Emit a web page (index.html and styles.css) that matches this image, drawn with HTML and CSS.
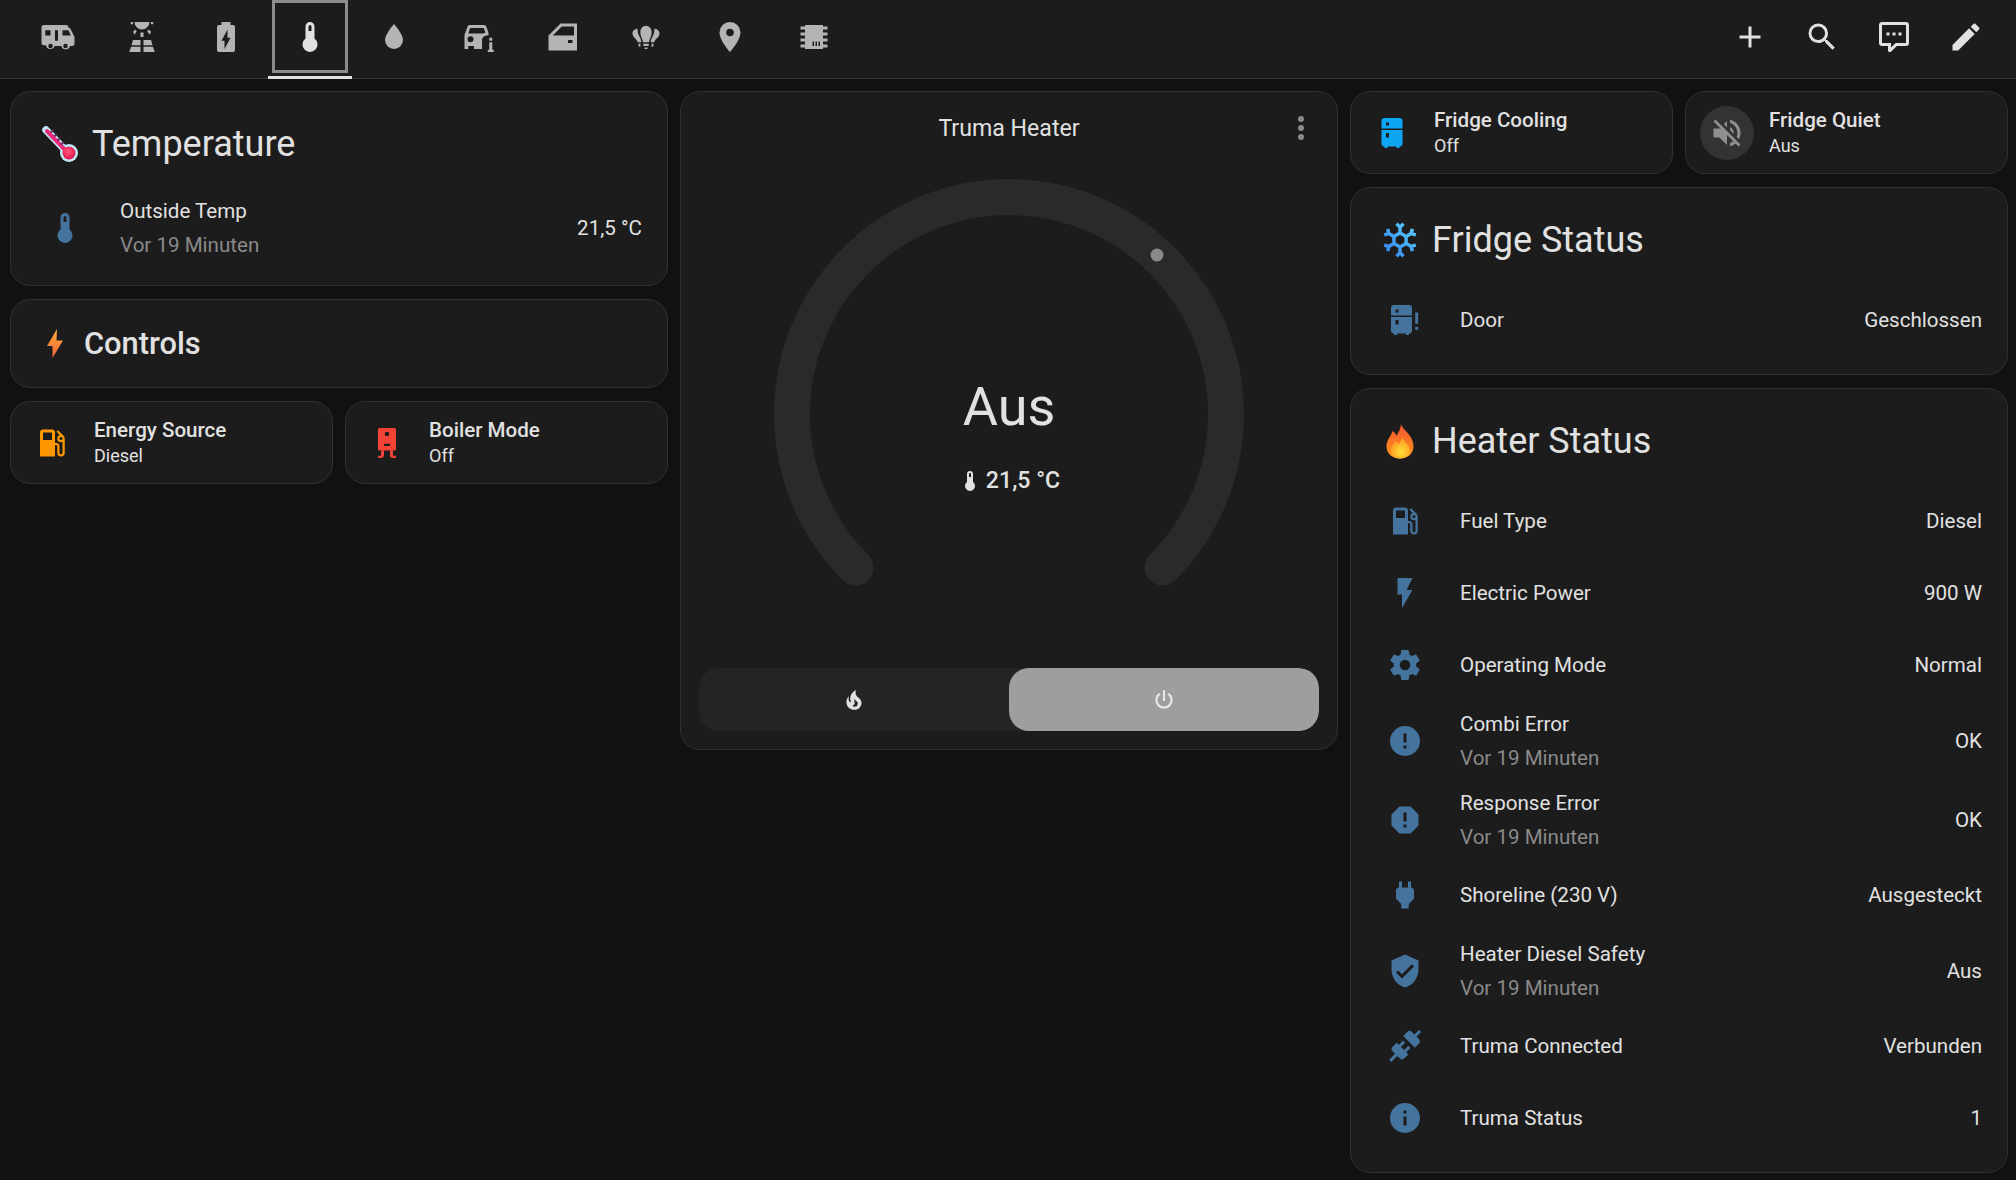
FILE: index.html
```html
<!DOCTYPE html>
<html lang="de">
<head>
<meta charset="utf-8">
<title>Truma Heater</title>
<link rel="stylesheet" href="styles.css">
</head>
<body>
<header class="topbar">
  <nav class="tabs">
    <div class="tab"><span class="tab-box"><svg class="ic" viewBox="0 0 24 24"><path fill-rule="evenodd" d="M2.5 4H17c1 0 1.6.4 2 1.1l.3.9H20l3 6v4.5c0 .8-.6 1.5-1.5 1.5H20a3 3 0 0 1-5.8 0H9.8A3 3 0 0 1 4 17.5H2.5C1.600 17.500 1 16.900 1 16V5.500C1 4.700 1.600 4 2.500 4ZM3.500 7.500V11H7V7.500ZM10 7.500V14.500H12V7.500ZM15 7.500V11H20.500L19 7.500ZM7 16.500A1.500 1.500 0 1 0 7 19.500A1.500 1.500 0 1 0 7 16.500ZM17 16.500A1.500 1.500 0 1 0 17 19.500A1.500 1.500 0 1 0 17 16.500Z"/></svg></span></div>
    <div class="tab"><span class="tab-box"><svg class="ic" viewBox="0 0 24 24"><path d="M7 2h10a5 5 0 0 1-10 0ZM4.500 2H6v1.500H4.500ZM18 2h1.500v1.500H18ZM6 8.500 7.500 7l1 1L7 10.500ZM18 8.500 16.500 7l-1 1 1.500 2.500ZM11 9h2v3h-2ZM6 14h5v3.500H5ZM13 14h5l1 3.500h-6ZM4.700 18.500H11V22H3.500ZM13 18.500h6.300l1.200 3.500H13Z"/></svg></span></div>
    <div class="tab"><span class="tab-box"><svg class="ic" viewBox="0 0 24 24"><path d="M16.670 4H15V2H9V4H7.330A1.330 1.330 0 0 0 6 5.330V20.670C6 21.400 6.600 22 7.330 22H16.670A1.330 1.330 0 0 0 18 20.670V5.330C18 4.600 17.400 4 16.670 4M11 20V14.500H9L13 7V12.500H15"/></svg></span></div>
    <div class="tab tab-active"><span class="tab-box"><svg class="ic" viewBox="0 0 24 24"><path d="M15 13V5A3 3 0 0 0 9 5V13A5 5 0 1 0 15 13M12 4A1 1 0 0 1 13 5V8H11V5A1 1 0 0 1 12 4Z"/></svg></span></div>
    <div class="tab"><span class="tab-box"><svg class="ic" viewBox="0 0 24 24"><path d="M12 20A6 6 0 0 1 6 14C6 10 12 3.250 12 3.250C12 3.250 18 10 18 14A6 6 0 0 1 12 20Z"/></svg></span></div>
    <div class="tab"><span class="tab-box"><svg class="ic" viewBox="0 0 24 24"><path fill-rule="evenodd" d="M6.500 4H16c.8 0 1.400.5 1.600 1.200L19 9.300V10.800C17 10.800 15.500 11.500 14.700 13.300V20H9.300V18H5.500V20H3V10.500L5 5.200C5.200 4.500 5.700 4 6.500 4ZM6.800 6 5.500 9.700H15.500L17 9 15.800 6ZM7 11.500A2 2 0 1 0 7 15.500A2 2 0 1 0 7 11.500ZM19.500 12.500H21.500V14.500H19.500ZM19.500 15.500H21.500V20.500H22.500V22H18.500V20.500H19.500Z"/></svg></span></div>
    <div class="tab"><span class="tab-box"><svg class="ic" viewBox="0 0 24 24"><path d="M19 14H16V16H19V14ZM22 21H3V11L11 3H22V21M11.830 5L5.830 11H20V5H11.830Z"/></svg></span></div>
    <div class="tab"><span class="tab-box"><svg class="ic" viewBox="0 0 24 24"><path d="M12 4.500C14.300 4.500 15.800 6.500 15.800 9C15.800 11.500 14.300 13 14 15.500H10C9.700 13 8.200 11.500 8.200 9C8.200 6.500 9.700 4.500 12 4.500ZM10.200 16.500H13.800V18H10.200ZM11 19H13V20H11ZM6.500 6.500C6.200 7.500 6.500 9.500 7.300 11C8 12.300 8.700 13.500 8.900 15.500H6.500C6.300 13.500 3 12.500 3 9.500C3 7.800 4.800 6.500 6.500 6.500ZM17.500 6.500C19.200 6.500 21 7.800 21 9.500C21 12.500 17.700 13.500 17.500 15.500H15.100C15.300 13.500 16 12.300 16.700 11C17.500 9.500 17.800 7.500 17.500 6.500ZM6.800 16.500H8.300V18.500H7.300ZM15.700 16.500H17.200L16.700 18.500H15.700Z"/></svg></span></div>
    <div class="tab"><span class="tab-box"><svg class="ic" viewBox="0 0 24 24"><path d="M12 11.500A2.500 2.500 0 0 1 9.500 9A2.500 2.500 0 0 1 12 6.500A2.500 2.500 0 0 1 14.500 9A2.500 2.500 0 0 1 12 11.500M12 2A7 7 0 0 0 5 9C5 14.250 12 22 12 22C12 22 19 14.250 19 9A7 7 0 0 0 12 2Z"/></svg></span></div>
    <div class="tab"><span class="tab-box"><svg class="ic" viewBox="0 0 24 24"><path d="M6 4H18V5H21V7H18V9H21V11H18V13H21V15H18V17H21V19H18V20H6V19H3V17H6V15H3V13H6V11H3V9H6V7H3V5H6V4M11 15V18H12V15H11M13 15V18H14V15H13M15 15V18H16V15H15Z"/></svg></span></div>
  </nav>
  <div class="actions">
    <svg class="ic action" viewBox="0 0 24 24"><path d="M19 13H13V19H11V13H5V11H11V5H13V11H19V13Z"/></svg>
    <svg class="ic action" viewBox="0 0 24 24"><path d="M9.500 3A6.500 6.500 0 0 1 16 9.500C16 11.110 15.410 12.590 14.440 13.730L14.710 14H15.500L20.500 19L19 20.500L14 15.500V14.710L13.730 14.440C12.590 15.410 11.110 16 9.500 16A6.500 6.500 0 0 1 3 9.500A6.500 6.500 0 0 1 9.500 3M9.500 5C7 5 5 7 5 9.500C5 12 7 14 9.500 14C12 14 14 12 14 9.500C14 7 12 5 9.500 5Z"/></svg>
    <svg class="ic action" viewBox="0 0 24 24"><path d="M9 22A1 1 0 0 1 8 21V18H4A2 2 0 0 1 2 16V4C2 2.890 2.900 2 4 2H20A2 2 0 0 1 22 4V16A2 2 0 0 1 20 18H13.900L10.200 21.710C10 21.900 9.750 22 9.500 22V22H9M10 16V19.080L13.080 16H20V4H4V16H10M17 11V9H15V11H17M13 11V9H11V11H13M9 11V9H7V11H9Z"/></svg>
    <svg class="ic action" viewBox="0 0 24 24"><path d="M20.710 7.040C21.100 6.650 21.100 6 20.710 5.630L18.370 3.290C18 2.900 17.350 2.900 16.960 3.290L15.120 5.120L18.870 8.870M3 17.250V21H6.750L17.810 9.930L14.060 6.180L3 17.250Z"/></svg>
  </div>
</header>

<main class="grid">
  <section class="col">
    <article class="card">
      <h2 class="card-title">
        <svg class="emoji" viewBox="0 0 36 36"><defs><radialGradient id="bulb" cx=".45" cy=".4" r=".6"><stop offset="0" stop-color="#ff5a7a"/><stop offset="1" stop-color="#e3114f"/></radialGradient></defs><line x1="4" y1="4" x2="26" y2="27" stroke="#bfeaf7" stroke-width="7.500" stroke-linecap="round"/><circle cx="27" cy="27" r="9" fill="#bfeaf7"/><line x1="5" y1="5" x2="25" y2="26" stroke="#ef2a78" stroke-width="4" stroke-linecap="round"/><circle cx="27" cy="27" r="6.500" fill="url(#bulb)"/><path d="M8.500 6.500l3-2.500M12 10.500l3-2.500M15.500 14.500l3-2.500M19 18.500l3-2.500" stroke="#5a2a60" stroke-width="1.800"/></svg>
        <span>Temperature</span>
      </h2>
      <div class="row row-two">
        <svg class="ic row-ic" viewBox="0 0 24 24"><path d="M15 13V5A3 3 0 0 0 9 5V13A5 5 0 1 0 15 13M12 4A1 1 0 0 1 13 5V8H11V5A1 1 0 0 1 12 4Z"/></svg>
        <div class="row-text"><div class="row-name">Outside Temp</div><div class="row-sub">Vor 19 Minuten</div></div>
        <div class="row-value">21,5 °C</div>
      </div>
    </article>

    <article class="card card-controls">
      <svg class="bolt" viewBox="0 0 16 29"><defs><linearGradient id="boltg" x1="0" y1="0" x2="0" y2="1"><stop offset="0" stop-color="#ffb13b"/><stop offset="1" stop-color="#f0603a"/></linearGradient></defs><path fill="url(#boltg)" d="M10 0 0 17h5.500L5.500 29 16 11.500H9.500Z"/></svg>
      <h2 class="controls-title">Controls</h2>
    </article>

    <div class="tiles">
      <article class="tile">
        <span class="tile-ic"><svg class="ic ic-orange" viewBox="0 0 24 24"><path d="M18 10A1 1 0 0 1 17 9A1 1 0 0 1 18 8A1 1 0 0 1 19 9A1 1 0 0 1 18 10M12 10H6V5H12M19.770 7.230L19.780 7.220L16.060 3.500L15 4.560L17.110 6.670C16.170 7 15.500 7.930 15.500 9A2.500 2.500 0 0 0 18 11.500C18.360 11.500 18.690 11.420 19 11.290V18.500A1 1 0 0 1 18 19.500A1 1 0 0 1 17 18.500V14C17 12.890 16.100 12 15 12H14V5C14 3.890 13.100 3 12 3H6C4.890 3 4 3.890 4 5V21H14V13.500H15.500V18.500A2.500 2.500 0 0 0 18 21A2.500 2.500 0 0 0 20.500 18.500V9C20.500 8.310 20.220 7.680 19.770 7.230Z"/></svg></span>
        <div class="tile-text"><div class="tile-name">Energy Source</div><div class="tile-sub">Diesel</div></div>
      </article>
      <article class="tile">
        <span class="tile-ic"><svg class="ic ic-red" viewBox="0 0 24 24"><path fill-rule="evenodd" d="M7 2h10a1 1 0 0 1 1 1v13a1 1 0 0 1-1 1H7a1 1 0 0 1-1-1V3a1 1 0 0 1 1-1ZM12 4.500a1.500 1.500 0 1 0 0 3a1.500 1.500 0 1 0 0-3ZM10 12.500V14H14V12.500Z"/><path d="M8 17h2v3.200c0 1-.8 1.800-1.800 1.800H6v-1.500h1.600c.2 0 .4-.2.4-.4ZM14 17h2v3.100c0 .2.200.4.400.4H18V22h-2.200c-1 0-1.800-.8-1.800-1.800Z"/></svg></span>
        <div class="tile-text"><div class="tile-name">Boiler Mode</div><div class="tile-sub">Off</div></div>
      </article>
    </div>
  </section>

  <section class="col">
    <article class="card thermostat">
      <div class="th-head">
        <div class="th-title">Truma Heater</div>
        <svg class="ic th-menu" viewBox="0 0 24 24"><path d="M12 16A2 2 0 0 1 14 18A2 2 0 0 1 12 20A2 2 0 0 1 10 18A2 2 0 0 1 12 16M12 10A2 2 0 0 1 14 12A2 2 0 0 1 12 14A2 2 0 0 1 10 12A2 2 0 0 1 12 10M12 4A2 2 0 0 1 14 6A2 2 0 0 1 12 8A2 2 0 0 1 10 6A2 2 0 0 1 12 4Z"/></svg>
      </div>
      <div class="dial">
        <svg class="dial-svg" viewBox="0 0 480 480"><path class="dial-track" d="M86.500 393.500A217 217 0 1 1 393.500 393.500"/><circle class="dial-dot" cx="388" cy="81" r="6.500"/></svg>
        <div class="dial-state">Aus</div>
        <div class="dial-temp"><svg class="ic dial-temp-ic" viewBox="0 0 24 24"><path d="M15 13V5A3 3 0 0 0 9 5V13A5 5 0 1 0 15 13M12 4A1 1 0 0 1 13 5V8H11V5A1 1 0 0 1 12 4Z"/></svg><span>21,5 °C</span></div>
      </div>
      <div class="seg">
        <div class="seg-item"><svg class="ic seg-ic" viewBox="0 0 24 24"><path d="M17.660 11.200C17.430 10.900 17.150 10.640 16.890 10.380C16.220 9.780 15.460 9.350 14.820 8.720C13.330 7.260 13 4.850 13.950 3C13 3.230 12.170 3.750 11.460 4.320C8.870 6.400 7.850 10.070 9.070 13.220C9.110 13.320 9.150 13.420 9.150 13.550C9.150 13.770 9 13.970 8.800 14.050C8.570 14.150 8.330 14.090 8.140 13.930C8.080 13.880 8.040 13.830 8 13.760C6.870 12.330 6.690 10.280 7.450 8.640C5.780 10 4.870 12.300 5 14.470C5.060 14.970 5.120 15.470 5.290 15.970C5.430 16.570 5.700 17.170 6 17.700C7.080 19.430 8.950 20.670 10.960 20.920C13.100 21.190 15.390 20.800 17.030 19.320C18.860 17.660 19.500 15 18.560 12.720L18.430 12.460C18.220 12 17.660 11.200 17.660 11.200M14.500 17.500C14.220 17.740 13.760 18 13.400 18.100C12.280 18.500 11.160 17.940 10.500 17.280C11.690 17 12.400 16.120 12.610 15.230C12.780 14.430 12.460 13.770 12.330 13C12.210 12.260 12.230 11.630 12.500 10.940C12.690 11.320 12.890 11.700 13.130 12C13.900 13 15.110 13.440 15.370 14.800C15.410 14.940 15.430 15.080 15.430 15.230C15.460 16.050 15.100 16.950 14.500 17.500H14.500Z"/></svg></div>
        <div class="seg-item seg-active"><svg class="ic seg-ic" viewBox="0 0 24 24"><path d="M16.560 5.440L15.110 6.890C16.840 7.940 18 9.830 18 12A6 6 0 0 1 12 18A6 6 0 0 1 6 12C6 9.830 7.160 7.940 8.880 6.880L7.440 5.440C5.360 6.880 4 9.280 4 12A8 8 0 0 0 12 20A8 8 0 0 0 20 12C20 9.280 18.640 6.880 16.560 5.440M13 3H11V13H13"/></svg></div>
      </div>
    </article>
  </section>

  <section class="col">
    <div class="tiles">
      <article class="tile">
        <span class="tile-ic"><svg class="ic ic-sky" viewBox="0 0 24 24"><path d="M7 2H17A2 2 0 0 1 19 4V9H5V4A2 2 0 0 1 7 2M19 19A2 2 0 0 1 17 21V22H15V21H9V22H7V21A2 2 0 0 1 5 19V10H19V19M8 5V7H10V5H8M8 12V15H10V12H8Z"/></svg></span>
        <div class="tile-text"><div class="tile-name">Fridge Cooling</div><div class="tile-sub">Off</div></div>
      </article>
      <article class="tile">
        <span class="tile-ic tile-ic-round"><svg class="ic ic-mute" viewBox="0 0 24 24"><path d="M12 4L9.910 6.090L12 8.180M4.270 3L3 4.270L7.730 9H3V15H7L12 20V13.270L16.250 17.530C15.580 18.040 14.830 18.460 14 18.700V20.770C15.380 20.450 16.630 19.820 17.680 18.960L19.730 21L21 19.730L12 10.730M19 12C19 12.940 18.800 13.820 18.460 14.640L19.970 16.150C20.620 14.910 21 13.500 21 12C21 7.720 18 4.140 14 3.230V5.290C16.890 6.150 19 8.830 19 12M16.500 12C16.500 10.230 15.500 8.710 14 7.970V10.180L16.450 12.630C16.500 12.430 16.500 12.210 16.500 12Z"/></svg></span>
        <div class="tile-text"><div class="tile-name">Fridge Quiet</div><div class="tile-sub">Aus</div></div>
      </article>
    </div>

    <article class="card">
      <h2 class="card-title">
        <svg class="emoji emoji-snow" viewBox="0 0 24 24"><defs><linearGradient id="snowg" x1="0" y1="1" x2="1" y2="0"><stop offset="0" stop-color="#2f7fe8"/><stop offset="1" stop-color="#5fd3ff"/></linearGradient></defs><path fill="url(#snowg)" d="M20.790 13.950L18.460 14.570L16.460 13.440V10.560L18.460 9.430L20.790 10.050L21.310 8.120L19.540 7.650L20 5.880L18.070 5.360L17.450 7.690L15.450 8.820L13 7.380V5.120L14.710 3.410L13.290 2L12 3.290L10.710 2L9.290 3.410L11 5.120V7.380L8.500 8.820L6.500 7.690L5.920 5.360L4 5.880L4.470 7.650L2.700 8.120L3.220 10.050L5.550 9.430L7.550 10.560V13.450L5.550 14.580L3.220 13.960L2.700 15.890L4.470 16.360L4 18.120L5.930 18.640L6.550 16.310L8.550 15.180L11 16.620V18.880L9.290 20.590L10.710 22L12 20.710L13.290 22L14.700 20.590L13 18.880V16.620L15.500 15.170L17.500 16.300L18.120 18.630L20 18.120L19.530 16.350L21.300 15.880L20.790 13.950M9.500 10.560L12 9.110L14.500 10.560V13.440L12 14.890L9.500 13.440V10.560Z"/></svg>
        <span>Fridge Status</span>
      </h2>
      <div class="row">
        <svg class="ic row-ic" viewBox="0 0 24 24"><path transform="translate(-2.330)" d="M7 2H17A2 2 0 0 1 19 4V9H5V4A2 2 0 0 1 7 2M19 19A2 2 0 0 1 17 21V22H15V21H9V22H7V21A2 2 0 0 1 5 19V10H19V19M8 5V7H10V5H8M8 12V15H10V12H8Z"/><path d="M18.800 7H20.800V14.500H18.800ZM18.800 16.500H20.800V18.500H18.800Z"/></svg>
        <div class="row-text"><div class="row-name">Door</div></div>
        <div class="row-value">Geschlossen</div>
      </div>
    </article>

    <article class="card">
      <h2 class="card-title">
        <svg class="emoji" viewBox="0 0 36 36"><defs><linearGradient id="flameg" x1="0" y1="0" x2="0" y2="1"><stop offset="0" stop-color="#f4512c"/><stop offset="1" stop-color="#ff9a1f"/></linearGradient><radialGradient id="flamei" cx=".55" cy=".7" r=".7"><stop offset="0" stop-color="#ffe03a"/><stop offset="1" stop-color="#ff8a1e"/></radialGradient></defs><path fill="url(#flameg)" d="M19 .5C20 7 31.500 11.500 31.500 23.500C31.500 30.500 26 35.500 18 35.500C10 35.500 4.500 30.500 4.500 23.500C4.500 16.500 9.500 13 10.500 8C12.500 9 14 11 14.500 13C16.500 9 19 5.500 19 .5Z"/><path fill="url(#flamei)" d="M20 13C21 19 28 21.500 28 28C28 32.500 23.500 35.500 18 35.500C12.500 35.500 8.500 32.500 8.500 27.500C8.500 23 12 21.500 13.500 18C15 19 16 20.500 16.300 22C18 19 20 16.500 20 13Z"/></svg>
        <span>Heater Status</span>
      </h2>
      <div class="row">
        <svg class="ic row-ic" viewBox="0 0 24 24"><path d="M18 10A1 1 0 0 1 17 9A1 1 0 0 1 18 8A1 1 0 0 1 19 9A1 1 0 0 1 18 10M12 10H6V5H12M19.770 7.230L19.780 7.220L16.060 3.500L15 4.560L17.110 6.670C16.170 7 15.500 7.930 15.500 9A2.500 2.500 0 0 0 18 11.500C18.360 11.500 18.690 11.420 19 11.290V18.500A1 1 0 0 1 18 19.500A1 1 0 0 1 17 18.500V14C17 12.890 16.100 12 15 12H14V5C14 3.890 13.100 3 12 3H6C4.890 3 4 3.890 4 5V21H14V13.500H15.500V18.500A2.500 2.500 0 0 0 18 21A2.500 2.500 0 0 0 20.500 18.500V9C20.500 8.310 20.220 7.680 19.770 7.230Z"/></svg>
        <div class="row-text"><div class="row-name">Fuel Type</div></div>
        <div class="row-value">Diesel</div>
      </div>
      <div class="row">
        <svg class="ic row-ic" viewBox="0 0 24 24"><path d="M7 2V13H10V22L17 10H13L17 2H7Z"/></svg>
        <div class="row-text"><div class="row-name">Electric Power</div></div>
        <div class="row-value">900 W</div>
      </div>
      <div class="row">
        <svg class="ic row-ic" viewBox="0 0 24 24"><path d="M12 15.500A3.500 3.500 0 0 1 8.500 12A3.500 3.500 0 0 1 12 8.500A3.500 3.500 0 0 1 15.500 12A3.500 3.500 0 0 1 12 15.500M19.430 12.970C19.470 12.650 19.500 12.330 19.500 12C19.500 11.670 19.470 11.340 19.430 11L21.540 9.370C21.730 9.220 21.780 8.950 21.660 8.730L19.660 5.270C19.540 5.050 19.270 4.960 19.050 5.050L16.560 6.050C16.040 5.660 15.500 5.320 14.870 5.070L14.500 2.420C14.460 2.180 14.250 2 14 2H10C9.750 2 9.540 2.180 9.500 2.420L9.130 5.070C8.500 5.320 7.960 5.660 7.440 6.050L4.950 5.050C4.730 4.960 4.460 5.050 4.340 5.270L2.340 8.730C2.210 8.950 2.270 9.220 2.460 9.370L4.570 11C4.530 11.340 4.500 11.670 4.500 12C4.500 12.330 4.530 12.650 4.570 12.970L2.460 14.630C2.270 14.780 2.210 15.050 2.340 15.270L4.340 18.730C4.460 18.950 4.730 19.030 4.950 18.950L7.440 17.940C7.960 18.340 8.500 18.680 9.130 18.930L9.500 21.580C9.540 21.820 9.750 22 10 22H14C14.250 22 14.460 21.820 14.500 21.580L14.870 18.930C15.500 18.670 16.040 18.340 16.560 17.940L19.050 18.950C19.270 19.030 19.540 18.950 19.660 18.730L21.660 15.270C21.780 15.050 21.730 14.780 21.540 14.630L19.430 12.970Z"/></svg>
        <div class="row-text"><div class="row-name">Operating Mode</div></div>
        <div class="row-value">Normal</div>
      </div>
      <div class="row row-two">
        <svg class="ic row-ic" viewBox="0 0 24 24"><path d="M13 13H11V7H13M13 17H11V15H13M12 2A10 10 0 0 0 2 12A10 10 0 0 0 12 22A10 10 0 0 0 22 12A10 10 0 0 0 12 2Z"/></svg>
        <div class="row-text"><div class="row-name">Combi Error</div><div class="row-sub">Vor 19 Minuten</div></div>
        <div class="row-value">OK</div>
      </div>
      <div class="row row-two">
        <svg class="ic row-ic" viewBox="0 0 24 24"><path d="M13 13H11V7H13M11 15H13V17H11M15.730 3H8.270L3 8.270V15.730L8.270 21H15.730L21 15.730V8.270L15.730 3Z"/></svg>
        <div class="row-text"><div class="row-name">Response Error</div><div class="row-sub">Vor 19 Minuten</div></div>
        <div class="row-value">OK</div>
      </div>
      <div class="row">
        <svg class="ic row-ic" viewBox="0 0 24 24"><path d="M16 7V3H14V7H10V3H8V7H8C7 7 6 8 6 9V14.500L9.500 18V21H14.500V18L18 14.500V9C18 8 17 7 16 7Z"/></svg>
        <div class="row-text"><div class="row-name">Shoreline (230 V)</div></div>
        <div class="row-value">Ausgesteckt</div>
      </div>
      <div class="row row-two">
        <svg class="ic row-ic" viewBox="0 0 24 24"><path d="M10 17L6 13L7.410 11.590L10 14.170L16.590 7.580L18 9M12 1L3 5V11C3 16.550 6.840 21.740 12 23C17.160 21.740 21 16.550 21 11V5L12 1Z"/></svg>
        <div class="row-text"><div class="row-name">Heater Diesel Safety</div><div class="row-sub">Vor 19 Minuten</div></div>
        <div class="row-value">Aus</div>
      </div>
      <div class="row">
        <svg class="ic row-ic" viewBox="0 0 24 24"><path d="M21.400 7.500C22.200 8.300 22.200 9.600 21.400 10.300L18.600 13.100L10.800 5.300L13.600 2.500C14.400 1.700 15.700 1.700 16.500 2.500L18.300 4.300L21.300 1.300L22.700 2.700L19.700 5.700L21.400 7.500M15.600 13.300L14.200 11.900L11.400 14.700L9.300 12.600L12.100 9.800L10.700 8.400L7.900 11.200L6.400 9.800L3.600 12.600C2.800 13.400 2.800 14.700 3.600 15.400L5.400 17.200L1.400 21.200L2.800 22.600L6.800 18.600L8.600 20.400C9.400 21.200 10.700 21.200 11.400 20.400L14.200 17.600L12.800 16.200L15.600 13.300Z"/></svg>
        <div class="row-text"><div class="row-name">Truma Connected</div></div>
        <div class="row-value">Verbunden</div>
      </div>
      <div class="row">
        <svg class="ic row-ic" viewBox="0 0 24 24"><path d="M13 9H11V7H13M13 17H11V11H13M12 2A10 10 0 0 0 2 12A10 10 0 0 0 12 22A10 10 0 0 0 22 12A10 10 0 0 0 12 2Z"/></svg>
        <div class="row-text"><div class="row-name">Truma Status</div></div>
        <div class="row-value">1</div>
      </div>
    </article>
  </section>
</main>
</body>
</html>
```

FILE: styles.css
```css
* { box-sizing: border-box; }
html, body { height: 100%; }
body {
  margin: 0;
  background: #111111;
  color: #e1e1e1;
  font-family: Roboto, "Liberation Sans", sans-serif;
  overflow: hidden;
}
.ic { width: 36px; height: 36px; fill: currentColor; display: block; flex: none; }

.topbar {
  height: 79px;
  background: #1c1c1c;
  border-bottom: 1px solid #333333;
  display: flex;
  justify-content: space-between;
  padding: 0 32px 0 16px;
}
.tabs { display: flex; }
.tab {
  width: 84px;
  height: 79px;
  position: relative;
  color: #b4b4b4;
}
.tab-box {
  display: flex;
  align-items: center;
  justify-content: center;
  width: 76px;
  height: 73px;
  margin: 0 4px;
  padding-top: 1px;
}
.tab-active { color: #e1e1e1; }
.tab-active .tab-box { border: 3px solid #8c8c8c; }
.tab-active::after {
  content: "";
  position: absolute;
  left: 0;
  right: 0;
  top: 76px;
  height: 3px;
  background: #e1e1e1;
}
.actions { display: flex; gap: 36px; padding-top: 19px; }
.action { color: #e1e1e1; }

.grid {
  display: grid;
  grid-template-columns: repeat(3, 658px);
  column-gap: 12px;
  padding: 12px 8px 0 10px;
}
.col { display: flex; flex-direction: column; gap: 13px; align-items: stretch; }

.card {
  background: #1c1c1c;
  border: 1px solid #303030;
  border-radius: 20px;
  padding-bottom: 18px;
}
.card-title {
  margin: 0;
  height: 96px;
  display: flex;
  align-items: center;
  gap: 14px;
  padding-left: 31px;
  padding-top: 8px;
  font-size: 36px;
  font-weight: 400;
}
.emoji { width: 36px; height: 36px; flex: none; display: block; }
.emoji-snow { width: 42px; height: 42px; margin: 0 -3px; }

.row {
  height: 72px;
  display: flex;
  align-items: center;
  padding: 0 25px 0 36px;
  font-size: 20.570px;
}
.row-two { height: 79px; }
.row-ic { color: #44739e; }
.row-text { flex: 1; margin-left: 37px; }
.row-name { line-height: 28px; }
.row-sub { line-height: 28px; color: #8a8a8a; margin-top: 6px; }

.card-controls {
  height: 89px;
  padding: 0 0 0 36px;
  display: flex;
  align-items: center;
}
.bolt { width: 16px; height: 29px; display: block; flex: none; }
.controls-title { margin: 0 0 0 21px; font-size: 30.800px; font-weight: 500; }

.tiles { display: grid; grid-template-columns: 1fr 1fr; column-gap: 12px; }
.tile {
  height: 83px;
  background: #1c1c1c;
  border: 1px solid #303030;
  border-radius: 20px;
  display: flex;
  align-items: center;
  padding-left: 14px;
}
.tile-ic { width: 54px; height: 54px; display: flex; align-items: center; justify-content: center; flex: none; }
.tile-ic-round { background: #333333; border-radius: 50%; }
.ic-orange { color: #ff9800; }
.ic-red { color: #f44336; }
.ic-sky { color: #0ca6f5; }
.ic-mute { color: #8f8f8f; }
.tile-text { margin-left: 15px; }
.tile-name { font-size: 20.570px; font-weight: 500; line-height: 26px; }
.tile-sub { font-size: 18px; line-height: 26px; }

.thermostat { height: 659px; padding: 0; display: flex; flex-direction: column; position: relative; }
.th-head { height: 73px; display: flex; align-items: center; justify-content: center; }
.th-title { font-size: 23.140px; }
.th-menu { position: absolute; right: 18px; top: 18px; color: #8a8a8a; }
.dial { position: relative; height: 503px; flex: none; display: flex; flex-direction: column; align-items: center; }
.dial-svg { position: absolute; left: 88px; top: 9px; width: 480px; height: 480px; }
.dial-track { fill: none; stroke: #2a2a2a; stroke-width: 36px; stroke-linecap: round; }
.dial-dot { fill: #8a8a8a; }
.dial-state { position: relative; margin-top: 210px; font-size: 54px; line-height: 64px; }
.dial-temp { position: relative; display: flex; align-items: center; gap: 4px; margin-top: 28px; font-size: 23.140px; font-weight: 500; line-height: 28px; }
.dial-temp-ic { width: 24px; height: 24px; }
.seg {
  margin: 0 18px;
  height: 63px;
  border-radius: 20px;
  background: #242424;
  display: grid;
  grid-template-columns: 1fr 1fr;
  overflow: hidden;
}
.seg-item { display: flex; align-items: center; justify-content: center; }
.seg-ic { width: 26px; height: 26px; }
.seg-active { background: #9e9e9e; border-radius: 20px; color: #e8e8e8; }
```
